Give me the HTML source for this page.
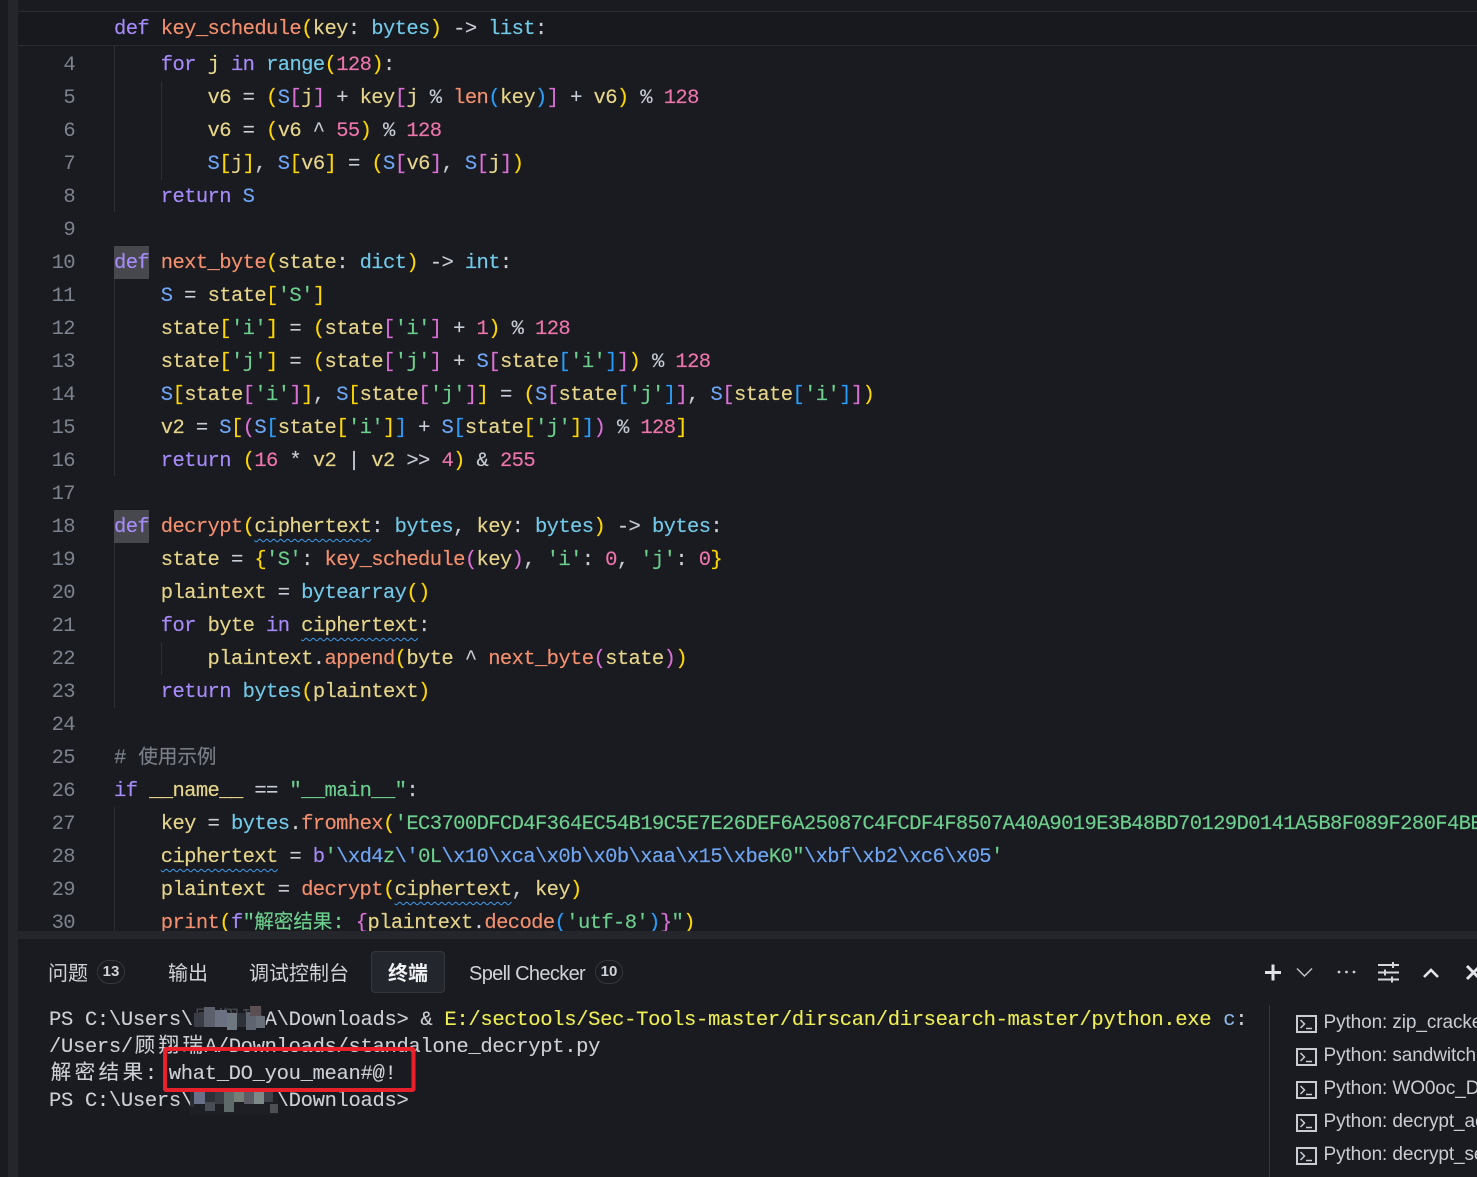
<!DOCTYPE html>
<html lang="zh"><head><meta charset="utf-8"><title>decrypt</title>
<style>
*{box-sizing:border-box}
html,body{margin:0;padding:0;background:#1a1b20;width:1477px;height:1177px;overflow:hidden}
body{position:relative;font-family:"Liberation Mono","Noto Sans CJK SC",monospace}
.bar{position:absolute;left:8px;top:0;width:10px;height:1177px;background:#24262b}
#ed{position:absolute;left:18px;top:0;width:1459px;height:931px;background:#1a1b20;border-bottom-left-radius:8px;overflow:hidden}
#gap{position:absolute;left:8px;top:931px;width:1469px;height:8px;background:#24262b}
#pn{position:absolute;left:18px;top:939px;width:1459px;height:238px;background:#1a1b20;border-top-left-radius:8px}
.l{position:absolute;left:96px;margin-top:1px;white-space:pre;font-size:20.5px;line-height:33px;height:33px;letter-spacing:-.61px;color:#c8ccd4;-webkit-text-stroke:.15px}
.ln{position:absolute;left:0;width:57px;margin-top:1px;text-align:right;font-size:20.5px;line-height:33px;height:33px;letter-spacing:-.62px;color:#7d838e}
.k{color:#a78bfa}.f{color:#f5906e}.v{color:#e6d58a}.t{color:#72c9e8}.c{color:#6ea6f5}.n{color:#ee74ac}.s{color:#6ccf8e}.o{color:#c8ccd4}
.y{color:#ffd700}.p{color:#da70d6}.b{color:#2a9dfa}.m{color:#7a808a}
.w{text-decoration:underline wavy #3c9df0 1px;text-underline-offset:6px}
.g{position:absolute;width:1px;background:#2c2e35}
.hl{position:absolute;left:96px;width:35px;height:33px;background:#47484d}
.tb{position:absolute;top:960px;font-family:"Liberation Sans","Noto Sans CJK SC",sans-serif;font-size:20px;line-height:28px;color:#d0d3d9;white-space:pre}
.bd{position:absolute;top:960px;width:28px;height:24px;border:1px solid #33363d;border-radius:12px;text-align:center;font-family:"Liberation Sans",sans-serif;font-weight:700;font-size:15px;line-height:22px;color:#cfd2d8}
.tl{position:absolute;left:49px;white-space:pre;font-size:20.5px;line-height:27px;height:27px;letter-spacing:-.32px;color:#cdd0d6;-webkit-text-stroke:.1px}
.cj{display:inline-block;width:23.96px;text-align:center;letter-spacing:0}
.c2{display:inline-block;width:19.5px;text-align:center;letter-spacing:0;font-size:19.5px}
.li{position:absolute;left:1323.5px;font-family:"Liberation Sans",sans-serif;font-size:19px;letter-spacing:-.1px;line-height:26px;color:#c9ccd2;white-space:pre;width:153.5px;overflow:hidden}
svg{position:absolute;overflow:visible}
</style></head><body>
<div class="bar"></div>
<div id="ed">
<div style="position:absolute;left:0;top:11px;width:1459px;height:35px;background:#18191e;border-top:1px solid #2a2c33;border-bottom:1px solid #2a2c33"></div>
<div class="l" style="top:12px"><span class="k">def</span> <span class="f">key_schedule</span><span class="y">(</span><span class="v">key</span>: <span class="t">bytes</span><span class="y">)</span> -&gt; <span class="t">list</span>:</div>
<div class="g" style="left:96px;top:46px;height:166px"></div>
<div class="g" style="left:143px;top:81px;height:99px"></div>
<div class="g" style="left:96px;top:278px;height:198px"></div>
<div class="g" style="left:96px;top:543px;height:165px"></div>
<div class="g" style="left:143px;top:642px;height:33px"></div>
<div class="g" style="left:96px;top:807px;height:124px"></div>
<div class="hl" style="top:246px"></div>
<div class="hl" style="top:510px"></div>

<div class="ln" style="top:48px">4</div><div class="l" style="top:48px">    <span class="k">for</span> <span class="v">j</span> <span class="k">in</span> <span class="t">range</span><span class="y">(</span><span class="n">128</span><span class="y">)</span>:</div>
<div class="ln" style="top:81px">5</div><div class="l" style="top:81px">        <span class="v">v6</span> = <span class="y">(</span><span class="c">S</span><span class="p">[</span><span class="v">j</span><span class="p">]</span> + <span class="v">key</span><span class="p">[</span><span class="v">j</span> % <span class="f">len</span><span class="b">(</span><span class="v">key</span><span class="b">)</span><span class="p">]</span> + <span class="v">v6</span><span class="y">)</span> % <span class="n">128</span></div>
<div class="ln" style="top:114px">6</div><div class="l" style="top:114px">        <span class="v">v6</span> = <span class="y">(</span><span class="v">v6</span> ^ <span class="n">55</span><span class="y">)</span> % <span class="n">128</span></div>
<div class="ln" style="top:147px">7</div><div class="l" style="top:147px">        <span class="c">S</span><span class="y">[</span><span class="v">j</span><span class="y">]</span>, <span class="c">S</span><span class="y">[</span><span class="v">v6</span><span class="y">]</span> = <span class="y">(</span><span class="c">S</span><span class="p">[</span><span class="v">v6</span><span class="p">]</span>, <span class="c">S</span><span class="p">[</span><span class="v">j</span><span class="p">]</span><span class="y">)</span></div>
<div class="ln" style="top:180px">8</div><div class="l" style="top:180px">    <span class="k">return</span> <span class="c">S</span></div>
<div class="ln" style="top:213px">9</div>
<div class="ln" style="top:246px">10</div><div class="l" style="top:246px"><span class="k">def</span> <span class="f">next_byte</span><span class="y">(</span><span class="v">state</span>: <span class="t">dict</span><span class="y">)</span> -&gt; <span class="t">int</span>:</div>
<div class="ln" style="top:279px">11</div><div class="l" style="top:279px">    <span class="c">S</span> = <span class="v">state</span><span class="y">[</span><span class="s">'S'</span><span class="y">]</span></div>
<div class="ln" style="top:312px">12</div><div class="l" style="top:312px">    <span class="v">state</span><span class="y">[</span><span class="s">'i'</span><span class="y">]</span> = <span class="y">(</span><span class="v">state</span><span class="p">[</span><span class="s">'i'</span><span class="p">]</span> + <span class="n">1</span><span class="y">)</span> % <span class="n">128</span></div>
<div class="ln" style="top:345px">13</div><div class="l" style="top:345px">    <span class="v">state</span><span class="y">[</span><span class="s">'j'</span><span class="y">]</span> = <span class="y">(</span><span class="v">state</span><span class="p">[</span><span class="s">'j'</span><span class="p">]</span> + <span class="c">S</span><span class="p">[</span><span class="v">state</span><span class="b">[</span><span class="s">'i'</span><span class="b">]</span><span class="p">]</span><span class="y">)</span> % <span class="n">128</span></div>
<div class="ln" style="top:378px">14</div><div class="l" style="top:378px">    <span class="c">S</span><span class="y">[</span><span class="v">state</span><span class="p">[</span><span class="s">'i'</span><span class="p">]</span><span class="y">]</span>, <span class="c">S</span><span class="y">[</span><span class="v">state</span><span class="p">[</span><span class="s">'j'</span><span class="p">]</span><span class="y">]</span> = <span class="y">(</span><span class="c">S</span><span class="p">[</span><span class="v">state</span><span class="b">[</span><span class="s">'j'</span><span class="b">]</span><span class="p">]</span>, <span class="c">S</span><span class="p">[</span><span class="v">state</span><span class="b">[</span><span class="s">'i'</span><span class="b">]</span><span class="p">]</span><span class="y">)</span></div>
<div class="ln" style="top:411px">15</div><div class="l" style="top:411px">    <span class="v">v2</span> = <span class="c">S</span><span class="y">[</span><span class="p">(</span><span class="c">S</span><span class="b">[</span><span class="v">state</span><span class="y">[</span><span class="s">'i'</span><span class="y">]</span><span class="b">]</span> + <span class="c">S</span><span class="b">[</span><span class="v">state</span><span class="y">[</span><span class="s">'j'</span><span class="y">]</span><span class="b">]</span><span class="p">)</span> % <span class="n">128</span><span class="y">]</span></div>
<div class="ln" style="top:444px">16</div><div class="l" style="top:444px">    <span class="k">return</span> <span class="y">(</span><span class="n">16</span> * <span class="v">v2</span> | <span class="v">v2</span> &gt;&gt; <span class="n">4</span><span class="y">)</span> &amp; <span class="n">255</span></div>
<div class="ln" style="top:477px">17</div>
<div class="ln" style="top:510px">18</div><div class="l" style="top:510px"><span class="k">def</span> <span class="f">decrypt</span><span class="y">(</span><span class="v w">ciphertext</span>: <span class="t">bytes</span>, <span class="v">key</span>: <span class="t">bytes</span><span class="y">)</span> -&gt; <span class="t">bytes</span>:</div>
<div class="ln" style="top:543px">19</div><div class="l" style="top:543px">    <span class="v">state</span> = <span class="y">{</span><span class="s">'S'</span>: <span class="f">key_schedule</span><span class="p">(</span><span class="v">key</span><span class="p">)</span>, <span class="s">'i'</span>: <span class="n">0</span>, <span class="s">'j'</span>: <span class="n">0</span><span class="y">}</span></div>
<div class="ln" style="top:576px">20</div><div class="l" style="top:576px">    <span class="v">plaintext</span> = <span class="t">bytearray</span><span class="y">()</span></div>
<div class="ln" style="top:609px">21</div><div class="l" style="top:609px">    <span class="k">for</span> <span class="v">byte</span> <span class="k">in</span> <span class="v w">ciphertext</span>:</div>
<div class="ln" style="top:642px">22</div><div class="l" style="top:642px">        <span class="v">plaintext</span>.<span class="f">append</span><span class="y">(</span><span class="v">byte</span> ^ <span class="f">next_byte</span><span class="p">(</span><span class="v">state</span><span class="p">)</span><span class="y">)</span></div>
<div class="ln" style="top:675px">23</div><div class="l" style="top:675px">    <span class="k">return</span> <span class="t">bytes</span><span class="y">(</span><span class="v">plaintext</span><span class="y">)</span></div>
<div class="ln" style="top:708px">24</div>
<div class="ln" style="top:741px">25</div><div class="l m" style="top:741px"># <span class="c2" style="margin-left:1px">使</span><span class="c2">用</span><span class="c2">示</span><span class="c2">例</span></div>
<div class="ln" style="top:774px">26</div><div class="l" style="top:774px"><span class="k">if</span> <span class="v">__name__</span> == <span class="s">"__main__"</span>:</div>
<div class="ln" style="top:807px">27</div><div class="l" style="top:807px">    <span class="v">key</span> = <span class="t">bytes</span>.<span class="f">fromhex</span><span class="y">(</span><span class="s">'EC3700DFCD4F364EC54B19C5E7E26DEF6A25087C4FCDF4F8507A40A9019E3B48BD70129D0141A5B8F089F280F4BE</span></div>
<div class="ln" style="top:840px">28</div><div class="l" style="top:840px">    <span class="v w">ciphertext</span> = <span class="k">b</span><span class="s">'</span><span class="c">\xd4</span><span class="s">z</span><span class="c">\'</span><span class="s">0L</span><span class="c">\x10\xca\x0b\x0b\xaa\x15\xbe</span><span class="s">K0"</span><span class="c">\xbf\xb2\xc6\x05</span><span class="s">'</span></div>
<div class="ln" style="top:873px">29</div><div class="l" style="top:873px">    <span class="v">plaintext</span> = <span class="f">decrypt</span><span class="y">(</span><span class="v w">ciphertext</span>, <span class="v">key</span><span class="y">)</span></div>
<div class="ln" style="top:906px">30</div><div class="l" style="top:906px">    <span class="f">print</span><span class="y">(</span><span class="k">f</span><span class="s">"</span><span class="s"><span class="c2">解</span><span class="c2">密</span><span class="c2">结</span><span class="c2">果</span>: </span><span class="p">{</span><span class="v">plaintext</span>.<span class="f">decode</span><span class="b">(</span><span class="s">'utf-8'</span><span class="b">)</span><span class="p">}</span><span class="s">"</span><span class="y">)</span></div>
</div>
<div id="gap"></div>
<div id="pn"></div>

<div class="tb" style="left:48px">问题</div><div class="bd" style="left:97px">13</div>
<div class="tb" style="left:168px">输出</div>
<div class="tb" style="left:249px">调试控制台</div>
<div style="position:absolute;left:371px;top:951px;width:74px;height:42px;background:#24262d;border:1px solid #34363d;border-radius:4px"></div>
<div class="tb" style="left:388px;color:#f0f1f3;font-weight:700">终端</div>
<div class="tb" style="left:469px;font-size:20px;letter-spacing:-.65px">Spell Checker</div><div class="bd" style="left:595px">10</div>

<svg style="left:0;top:0" width="1477" height="1177" fill="none">
<path d="M1265 972.500H1281M1273 964.500V980.500" stroke="#dfe1e5" stroke-width="3"/>
<path d="M1297 968.500L1304.500 976L1312 968.500" stroke="#c4c7cd" stroke-width="1.400"/>
<circle cx="1339" cy="972" r="1.400" fill="#c9ccd2"/><circle cx="1346.500" cy="972" r="1.400" fill="#c9ccd2"/><circle cx="1354" cy="972" r="1.400" fill="#c9ccd2"/>
<path d="M1378 965H1399M1378 972.500H1399M1378 979.500H1399" stroke="#d5d7dc" stroke-width="2"/>
<path d="M1393 962V968M1385 969.500V975.500M1392 976.500V982.500" stroke="#d5d7dc" stroke-width="2"/>
<path d="M1424 977L1431 970L1438 977" stroke="#e2e4e8" stroke-width="2.600"/>
<path d="M1467 966L1480 979M1480 966L1467 979" stroke="#e2e4e8" stroke-width="3"/>
<path d="M1269.500 1005V1177" stroke="#34363c"/>
<g stroke="#c9ccd2">
<g><rect x="1297" y="1016" width="19" height="16" stroke-width="2"/><path d="M1300.500 1020L1304.500 1024L1300.500 1028M1306 1028.500H1312" stroke-width="1.500"/></g>
<g transform="translate(0 33)"><rect x="1297" y="1016" width="19" height="16" stroke-width="2"/><path d="M1300.500 1020L1304.500 1024L1300.500 1028M1306 1028.500H1312" stroke-width="1.500"/></g>
<g transform="translate(0 66)"><rect x="1297" y="1016" width="19" height="16" stroke-width="2"/><path d="M1300.500 1020L1304.500 1024L1300.500 1028M1306 1028.500H1312" stroke-width="1.500"/></g>
<g transform="translate(0 99)"><rect x="1297" y="1016" width="19" height="16" stroke-width="2"/><path d="M1300.500 1020L1304.500 1024L1300.500 1028M1306 1028.500H1312" stroke-width="1.500"/></g>
<g transform="translate(0 132)"><rect x="1297" y="1016" width="19" height="16" stroke-width="2"/><path d="M1300.500 1020L1304.500 1024L1300.500 1028M1306 1028.500H1312" stroke-width="1.500"/></g>
</g>
</svg>
<div class="li" style="top:1010px">Python: zip_cracker</div>
<div class="li" style="top:1043px">Python: sandwitch</div>
<div class="li" style="top:1076px">Python: WO0oc_Dec</div>
<div class="li" style="top:1109px">Python: decrypt_aes</div>
<div class="li" style="top:1142px">Python: decrypt_sec</div>

<div class="tl" style="top:1007px;width:1210px">PS C:\Users\<span class="cj">顾</span><span class="cj">翔</span><span class="cj">瑞</span>A\Downloads&gt; &amp; <span style="color:#eeee55">E:/sectools/Sec-Tools-master/dirscan/dirsearch-master/python.exe</span> <span style="color:#8fb8e8">c</span>:</div>
<div class="tl" style="top:1034px">/Users/<span class="cj">顾</span><span class="cj">翔</span><span class="cj">瑞</span>A/Downloads/standalone_decrypt.py</div>
<div class="tl" style="top:1061px"><span class="cj">解</span><span class="cj">密</span><span class="cj">结</span><span class="cj">果</span>: what_DO_you_mean#@!</div>
<div class="tl" style="top:1088px">PS C:\Users\<span class="cj">顾</span><span class="cj">翔</span><span class="cj">瑞</span>A\Downloads&gt;</div>

<svg style="left:0;top:0" width="1477" height="1177">
<g shape-rendering="crispEdges">
<rect x="194" y="1006" width="72" height="26" fill="#1a1b20" opacity=".75"/>
<rect x="194" y="1013" width="10" height="14" fill="#3a3d45"/><rect x="204" y="1007" width="11" height="20" fill="#5a5f6b"/><rect x="215" y="1010" width="12" height="17" fill="#6b7180"/><rect x="227" y="1013" width="10" height="17" fill="#6d7880"/><rect x="237" y="1013" width="9" height="14" fill="#2f3138"/><rect x="246" y="1012" width="10" height="18" fill="#5e6470"/><rect x="250" y="1006" width="11" height="10" fill="#5a4f52"/><rect x="256" y="1016" width="9" height="12" fill="#696f78"/>
<rect x="190" y="1088" width="88" height="27" fill="#1e1f25"/>
<rect x="190" y="1091" width="4" height="16" fill="#2b2d34"/><rect x="194" y="1092" width="11" height="12" fill="#6a7088"/><rect x="205" y="1092" width="10" height="10" fill="#2f3138"/><rect x="205" y="1102" width="10" height="9" fill="#484c55"/><rect x="215" y="1092" width="9" height="12" fill="#3c3e46"/><rect x="224" y="1092" width="10" height="20" fill="#5e6a6a"/><rect x="234" y="1092" width="10" height="10" fill="#767e78"/><rect x="244" y="1092" width="10" height="12" fill="#5b5c66"/><rect x="254" y="1092" width="10" height="12" fill="#7e8a88"/><rect x="264" y="1092" width="9" height="10" fill="#40424a"/><rect x="270" y="1104" width="8" height="9" fill="#4d4f55"/>
</g>
<rect x="165" y="1049" width="248.500" height="41" fill="none" stroke="#e8202c" stroke-width="4" rx="1"/>
</svg>
</body></html>
